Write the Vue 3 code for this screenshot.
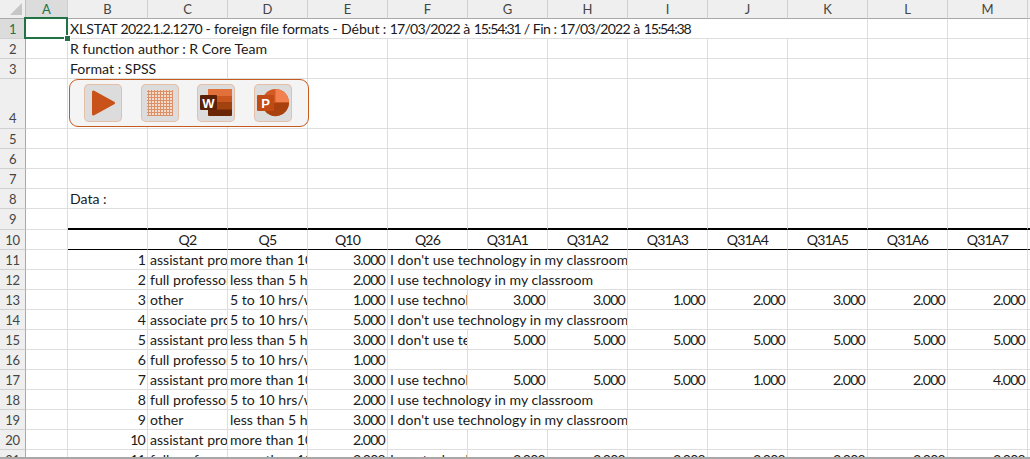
<script setup>
const letters = ['A','B','C','D','E','F','G','H','I','J','K','L','M','N']
const dont = "I don't use technology in my classroom"
const use = 'I use technology in my classroom'
const ap = 'assistant professor', fp = 'full professor', as = 'associate professor'
const m10 = 'more than 10 hrs/week', l5 = 'less than 5 hrs/week', t10 = '5 to 10 hrs/week'

function blanks(n, first) {
  return Array.from({ length: n }, () => ({ t: '', c: first ? first : '' }))
}
const title = [
  ['XLSTAT ', ''], ['2022.1.2.1270', 'dig'], [' - foreign file formats - Début : ', ''],
  ['17/03/2022', 'dig'], [' à ', ''], ['15:54:31', 'tm'], [' / Fin : ', 'tight'],
  ['17/03/2022', 'dig'], [' à ', ''], ['15:54:38', 'tm'],
]
const rows = []
rows.push({ n: 1, h: 'sel', cells: [{ t: '', c: '' }, { p: title, c: 'span10 title' }, ...blanks(3)] })
rows.push({ n: 2, cells: [{ t: '', c: '' }, { t: 'R function author : R Core Team', c: 'span3' }, ...blanks(10)] })
rows.push({ n: 3, cells: [{ t: '', c: '' }, { t: 'Format : SPSS', c: 'span2' }, ...blanks(11)] })
rows.push({ n: 4, h: 'tall', cells: blanks(14) })
for (const n of [5, 6, 7]) rows.push({ n, cells: blanks(14) })
rows.push({ n: 8, cells: [{ t: '', c: '' }, { t: 'Data :', c: '' }, ...blanks(12)] })
rows.push({ n: 9, cells: [{ t: '', c: '' }, ...blanks(13, 'thick')] })
const heads = ['', 'Q2', 'Q5', 'Q10', 'Q26', 'Q31A1', 'Q31A2', 'Q31A3', 'Q31A4', 'Q31A5', 'Q31A6', 'Q31A7', '']
rows.push({ n: 10, cells: [{ t: '', c: '' }, ...heads.map(t => ({ t, c: 'ctr thin dg' }))] })

const data = [
  [1, ap, m10, '3.000', dont, null],
  [2, fp, l5, '2.000', use, null],
  [3, 'other', t10, '1.000', 'I use technology in my classroom', ['3.000','3.000','1.000','2.000','3.000','2.000','2.000']],
  [4, as, t10, '5.000', dont, null],
  [5, ap, l5, '3.000', dont, ['5.000','5.000','5.000','5.000','5.000','5.000','5.000']],
  [6, fp, t10, '1.000', '', []],
  [7, ap, m10, '3.000', 'I use technology in my classroom', ['5.000','5.000','5.000','1.000','2.000','2.000','4.000']],
  [8, fp, t10, '2.000', use, null],
  [9, 'other', l5, '3.000', dont, null],
  [10, ap, m10, '2.000', '', []],
  [11, fp, m10, '2.000', 'I use technology in my classroom', ['3.000','3.000','3.000','3.000','3.000','3.000','3.000']],
]
for (const [n, c, d, e, f, vals] of data) {
  const cells = [{ t: '', c: '' }, { t: String(n), c: 'num' }, { t: c, c: '' }, { t: d, c: '' }, { t: e, c: 'num' }]
  if (vals === null) {
    cells.push({ t: f, c: 'span3' }, ...blanks(6))
  } else if (vals.length === 0) {
    cells.push(...blanks(9))
  } else {
    cells.push({ t: f, c: '' }, ...vals.map(t => ({ t, c: 'num' })), { t: '', c: '' })
  }
  rows.push({ n: n + 10, cells })
}
const gridLines = [0, 3, 6, 9, 12, 15, 18, 21, 24]
</script>

<template>
  <div class="window">
    <div class="sheet">
      <div class="grid">
        <div class="corner">
          <svg width="12" height="12" viewBox="0 0 12 12"><path d="M0 12 L12 0 V12 Z" fill="#c6c6c6" /></svg>
        </div>
        <div v-for="l in letters" :key="l" class="colhead" :class="{ active: l === 'A' }">{{ l }}</div>
        <template v-for="r in rows" :key="r.n">
          <div class="rowhead" :class="r.h"><span class="lab">{{ r.n }}</span></div>
          <div v-for="(c, i) in r.cells" :key="i" class="cell" :class="c.c">
            <template v-if="c.p"><span v-for="(s, j) in c.p" :key="j" :class="s[1]">{{ s[0] }}</span></template>
            <template v-else>{{ c.t }}</template>
          </div>
        </template>

        <div class="selection"><span class="handle"></span></div>

        <div class="panel">
          <div class="btn">
            <svg width="38" height="38" viewBox="0 0 38 38">
              <path d="M9.5 8 V30 L29.5 19 Z" fill="#c9521a" stroke="#c9521a" stroke-width="3" stroke-linejoin="round" />
            </svg>
          </div>
          <div class="btn">
            <svg width="38" height="38" viewBox="0 0 38 38">
              <rect x="6" y="6" width="26" height="26" fill="#f4dccd" />
              <g stroke="#da9068" stroke-width="1">
                <line v-for="p in gridLines" :key="'v' + p" :x1="7.5 + p" y1="6" :x2="7.5 + p" y2="32" />
                <line v-for="p in gridLines" :key="'h' + p" x1="6" :y1="7.5 + p" x2="32" :y2="7.5 + p" />
              </g>
            </svg>
          </div>
          <div class="btn">
            <svg width="38" height="38" viewBox="0 0 38 38">
              <rect x="11" y="5" width="24" height="27" rx="1" fill="#6b2606" />
              <rect x="11" y="5" width="24" height="7" fill="#e2703a" />
              <rect x="11" y="12" width="24" height="6.5" fill="#c9561f" />
              <rect x="11" y="18.5" width="24" height="7" fill="#a2420f" />
              <rect x="3" y="11" width="17" height="15" rx="1" fill="#5c1f08" />
              <text x="11.5" y="23.5" class="glyph" text-anchor="middle">W</text>
            </svg>
          </div>
          <div class="btn">
            <svg width="38" height="38" viewBox="0 0 38 38">
              <circle cx="21.5" cy="18.5" r="13.5" fill="#d35a22" />
              <path d="M21.5 18.5 V5 A13.5 13.5 0 0 1 35 18.5 Z" fill="#f3814f" />
              <path d="M21.5 18.5 H35 A13.5 13.5 0 0 1 10 25.7 L21.5 18.5 Z" fill="#a9410f" />
              <rect x="3" y="11" width="17" height="16" rx="1" fill="#c24a14" />
              <text x="11.5" y="24" class="glyph" text-anchor="middle">P</text>
            </svg>
          </div>
        </div>
      </div>
    </div>
    <div class="edge"></div>
  </div>
</template>

<style>
html, body { margin: 0; padding: 0; background: #fff; overflow: hidden; }
</style>

<style scoped>
.window {
  width: 1030px;
  height: 459px;
  display: flex;
  flex-direction: column;
  overflow: hidden;
  font-family: "Lato", "Liberation Sans", sans-serif;
  font-size: 14.1px;
  color: #1a1a1a;
}
.sheet {
  height: 457px;
  overflow: hidden;
  flex: none;
}
.edge {
  height: 2px;
  background: #a8a8a8;
  flex: none;
}
.grid {
  position: relative;
  display: grid;
  width: 1148px;
  grid-template-columns: 26px 42px repeat(13, 80px);
  grid-template-rows: 19px 20px 20px 20px 50px 20px 20px 20px 20px 21px repeat(11, 20px);
}
.corner {
  background: #efefef;
  border-right: 1px solid #c0c0c0;
  border-bottom: 1px solid #a8a8a8;
  box-sizing: border-box;
  display: flex;
  justify-content: flex-end;
  align-items: flex-end;
  padding: 0 3px 3px 0;
}
.colhead {
  background: #efefef;
  border-right: 1px solid #cfcfcf;
  border-bottom: 1px solid #a8a8a8;
  box-sizing: border-box;
  text-align: center;
  line-height: 18px;
  font-size: 13px;
  color: #444;
}
.colhead.active {
  background: #dcdcdc;
  color: #217346;
}
.rowhead {
  background: #efefef;
  border-right: 1px solid #a8a8a8;
  border-bottom: 1px solid #d0d0d0;
  box-sizing: border-box;
  text-align: center;
  line-height: 20px;
  font-size: 13px;
  letter-spacing: -0.4px;
  color: #444;
  overflow: hidden;
}
.rowhead.sel {
  background: #dcdcdc;
  color: #217346;
}
.rowhead.tall {
  display: flex;
  align-items: flex-end;
  justify-content: center;
}
.cell {
  box-sizing: border-box;
  border-right: 1px solid #dedede;
  border-bottom: 1px solid #dedede;
  line-height: 20px;
  padding: 0 0 0 2px;
  white-space: nowrap;
  overflow: hidden;
  min-width: 0;
  background: #fff;
}
.num {
  text-align: right;
  padding: 0 2px 0 0;
  letter-spacing: -0.8px;
}
.dg {
  letter-spacing: -0.8px;
}
.dig {
  letter-spacing: -0.8px;
}
.tm {
  letter-spacing: -1.15px;
}
.tight {
  letter-spacing: -0.5px;
}
.title {
  letter-spacing: -0.12px;
}
.ctr {
  text-align: center;
  padding: 0;
}
.thick {
  border-bottom: 2px solid #000;
}
.thin {
  border-bottom: 1px solid #000;
}
.span2 { grid-column: span 2; }
.span3 { grid-column: span 3; }
.span10 { grid-column: span 10; }
.selection {
  position: absolute;
  left: 24px;
  top: 17px;
  width: 44px;
  height: 22px;
  box-sizing: border-box;
  border: 2px solid #217346;
}
.handle {
  position: absolute;
  right: -4px;
  bottom: -4px;
  width: 5px;
  height: 5px;
  background: #217346;
  outline: 1px solid #fff;
}
.panel {
  position: absolute;
  left: 69px;
  top: 79px;
  width: 240px;
  height: 48px;
  box-sizing: border-box;
  border: 1px solid #c55a1e;
  border-radius: 9px;
  background: #f4f4f4;
  display: flex;
  align-items: center;
  gap: 18.6px;
  padding-left: 14px;
}
.btn {
  width: 38px;
  height: 38px;
  box-sizing: border-box;
  flex: none;
  background: #dcdcdc;
  box-shadow: inset 0 0 0 1px #e6bfa9;
  border-radius: 5px;
  display: block;
}
.btn svg { display: block; }
.glyph {
  font-family: "Liberation Sans", sans-serif;
  font-size: 13px;
  font-weight: 700;
  fill: #fff;
}
</style>
